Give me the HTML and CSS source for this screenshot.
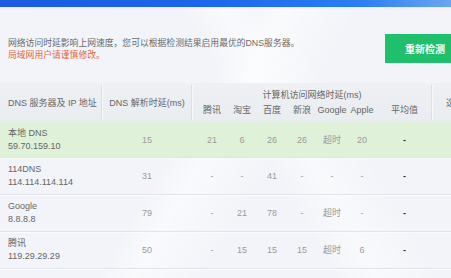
FILE: index.html
```html
<!DOCTYPE html>
<html lang="zh-CN">
<head>
<meta charset="utf-8">
<title>DNS优选</title>
<link rel="stylesheet" href="styles.css">
</head>
<body>
<div class="topbar"></div>
<div class="page">
  <div class="intro">
    <div class="intro-text">
      <div class="desc">网络访问时延影响上网速度，您可以根据检测结果启用最优的DNS服务器。</div>
      <div class="warn">局域网用户请谨慎修改。</div>
    </div>
    <div class="btn">重新检测</div>
  </div>

  <div class="table">
    <div class="thead">
      <div class="c-name h-cell sep">DNS 服务器及 IP 地址</div>
      <div class="c-dns h-cell sep">DNS 解析时延(ms)</div>
      <div class="c-grp sep">
        <div class="grp-title">计算机访问网络时延(ms)</div>
        <div class="grp-subs">
          <span class="c-s">腾讯</span>
          <span class="c-s">淘宝</span>
          <span class="c-s">百度</span>
          <span class="c-s">新浪</span>
          <span class="c-s">Google</span>
          <span class="c-s">Apple</span>
          <span class="c-avg">平均值</span>
        </div>
      </div>
      <div class="c-last h-cell">选择</div>
    </div>

    <div class="row row-local">
      <div class="c-name"><div>本地 DNS</div><div>59.70.159.10</div></div>
      <div class="c-dns val">15</div>
      <div class="c-grp-row">
        <span class="c-s val">21</span><span class="c-s val">6</span><span class="c-s val">26</span><span class="c-s val">26</span><span class="c-s val">超时</span><span class="c-s val">20</span><span class="c-avg dash">-</span>
      </div>
      <div class="c-last"></div>
    </div>

    <div class="row">
      <div class="c-name"><div>114DNS</div><div>114.114.114.114</div></div>
      <div class="c-dns val">31</div>
      <div class="c-grp-row">
        <span class="c-s val">-</span><span class="c-s val">-</span><span class="c-s val">41</span><span class="c-s val">-</span><span class="c-s val">-</span><span class="c-s val">-</span><span class="c-avg dash">-</span>
      </div>
      <div class="c-last"></div>
    </div>

    <div class="row">
      <div class="c-name"><div>Google</div><div>8.8.8.8</div></div>
      <div class="c-dns val">79</div>
      <div class="c-grp-row">
        <span class="c-s val">-</span><span class="c-s val">21</span><span class="c-s val">78</span><span class="c-s val">-</span><span class="c-s val">超时</span><span class="c-s val">-</span><span class="c-avg dash">-</span>
      </div>
      <div class="c-last"></div>
    </div>

    <div class="row">
      <div class="c-name"><div>腾讯</div><div>119.29.29.29</div></div>
      <div class="c-dns val">50</div>
      <div class="c-grp-row">
        <span class="c-s val">-</span><span class="c-s val">15</span><span class="c-s val">15</span><span class="c-s val">15</span><span class="c-s val">超时</span><span class="c-s val">6</span><span class="c-avg dash">-</span>
      </div>
      <div class="c-last"></div>
    </div>
  </div>
</div>
</body>
</html>
```

FILE: styles.css
```css
html, body {
  margin: 0;
  padding: 0;
}
body {
  width: 451px;
  height: 278px;
  overflow: hidden;
  font-family: "Liberation Sans", "Noto Sans CJK SC", sans-serif;
  font-size: 9px;
  color: #666;
  background:
    linear-gradient(120deg, rgba(255,255,255,0) 0%, rgba(255,255,255,0) 42%, rgba(255,255,255,0.55) 48%, rgba(255,255,255,0) 60%),
    linear-gradient(60deg, rgba(255,255,255,0) 55%, rgba(255,255,255,0.5) 62%, rgba(255,255,255,0) 72%),
    #f2f4f9;
}
.topbar {
  height: 7px;
  background: linear-gradient(90deg, #1a5be0 0%, #1c66ea 45%, #2b7ff0 80%, #6aa6ef 100%);
  border-bottom: 1px solid #e6ecf5;
}
.page {
  display: flex;
  flex-direction: column;
}
.intro {
  display: flex;
  align-items: center;
  justify-content: space-between;
  margin-top: 26px;
  padding-left: 8px;
}
.intro-text {
  display: flex;
  flex-direction: column;
  font-size: 8.8px;
  line-height: 12px;
  padding-top: 1px;
}
.desc { color: #6a6a6a; }
.warn { color: #e3683a; }
.btn {
  width: 80px;
  height: 29px;
  margin-right: -14px;
  background: #1fbf6b;
  color: #fff;
  font-weight: bold;
  font-size: 10px;
  display: flex;
  align-items: center;
  justify-content: center;
}
.table {
  margin-top: 20px;
  display: flex;
  flex-direction: column;
}
.thead {
  display: flex;
  height: 39px;
  background: linear-gradient(180deg, #eef0f4 0%, #e9ecf0 100%);
  color: #666;
}
.h-cell {
  display: flex;
  align-items: center;
}
.sep {
  position: relative;
}
.sep::after {
  content: "";
  position: absolute;
  right: 0;
  top: 2px;
  bottom: 2px;
  width: 1px;
  background: #dcdfe4;
  box-shadow: 1px 0 0 #f7f8fa;
}
.c-name {
  width: 102px;
  padding-left: 8px;
  box-sizing: border-box;
  flex: none;
}
.c-dns {
  width: 90px;
  flex: none;
  justify-content: center;
  text-align: center;
}
.c-grp {
  width: 240px;
  flex: none;
  display: flex;
  flex-direction: column;
  justify-content: center;
  align-items: stretch;
  gap: 1px;
}
.grp-title {
  text-align: center;
  line-height: 14px;
}
.grp-subs, .c-grp-row {
  display: flex;
  padding-left: 5px;
  line-height: 14px;
}
.c-grp-row {
  width: 240px;
  box-sizing: border-box;
  flex: none;
  align-items: center;
}
.c-s {
  width: 30px;
  text-align: center;
  flex: none;
}
.c-avg {
  width: 55px;
  text-align: center;
  flex: none;
}
.c-last {
  flex: 1;
  min-width: 0;
  padding-left: 14px;
  white-space: nowrap;
  overflow: hidden;
}
.row {
  display: flex;
  height: 36px;
  border-bottom: 1px solid #e1e4ea;
  box-shadow: 0 1px 0 #fafbfd;
  align-items: center;
}
.row-local {
  height: 35px;
  background: #e0f1da;
}
.row .c-name {
  line-height: 13px;
  color: #666;
}
.val {
  color: #9a9a9a;
}
.c-dns.val {
  display: block;
}
.dash {
  color: #333;
  font-weight: bold;
}
```
